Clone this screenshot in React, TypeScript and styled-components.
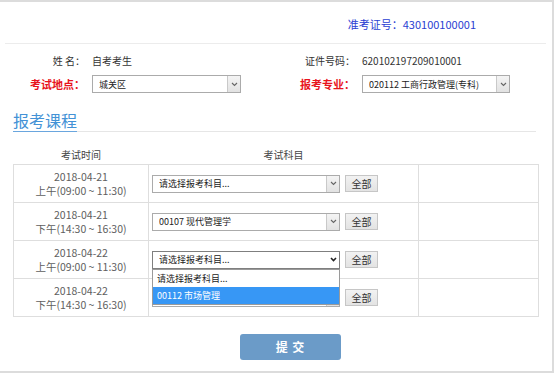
import React from 'react';
import styled, { createGlobalStyle } from 'styled-components';

const GlobalStyle = createGlobalStyle`
  body {
    margin: 0;
    background: #fff;
    font-family: "Noto Sans CJK SC", "Open Sans", sans-serif;
    color: #333;
  }
`;

const Frame = styled.div`
  box-sizing: border-box;
  width: 554px;
  height: 373px;
  border-top: 2px solid #dcdcdc;
  border-right: 2px solid #dcdcdc;
  border-bottom: 2px solid #dcdcdc;
  overflow: hidden;
`;

const TicketBar = styled.div`
  box-sizing: border-box;
  height: 41px;
  padding: 3px 76px 0 0;
  display: flex;
  align-items: center;
  justify-content: flex-end;
  font-size: 11px;
  color: #2a3ed2;
`;

const Divider = styled.div`
  height: 1px;
  margin: 0 6px 0 5px;
  background: #ececec;
`;

const InfoGrid = styled.div`
  display: flex;
  flex-direction: column;
  gap: 6px;
  padding-top: 7px;
`;

const InfoRow = styled.div`
  display: flex;
  align-items: center;
  height: 18px;
`;

const Field = styled.div<{ $width?: number }>`
  display: flex;
  align-items: center;
  width: ${({ $width }) => ($width ? `${$width}px` : 'auto')};
`;

const Label = styled.span<{ $width: number; $accent?: boolean }>`
  width: ${({ $width }) => $width}px;
  margin-right: 7px;
  text-align: right;
  white-space: nowrap;
  font-size: ${({ $accent }) => ($accent ? '11px' : '10px')};
  font-weight: ${({ $accent }) => ($accent ? 700 : 400)};
  color: ${({ $accent }) => ($accent ? '#e8141c' : '#333')};
`;

const Value = styled.span`
  font-size: 10px;
  color: #333;
  white-space: nowrap;
`;

const SelectBox = styled.div<{ $width: number; $focused?: boolean }>`
  box-sizing: border-box;
  width: ${({ $width }) => $width}px;
  height: 18px;
  display: flex;
  align-items: center;
  border: 1px solid ${({ $focused }) => ($focused ? '#7f7f7f' : '#ababab')};
  background: #fff;
  font-size: 9px;
  color: #222;
  padding-left: 6px;
  white-space: nowrap;
`;

const SelectText = styled.span`
  flex: 1;
  overflow: hidden;
`;

const ArrowBox = styled.span<{ $focused?: boolean }>`
  box-sizing: border-box;
  width: 13px;
  height: 100%;
  display: flex;
  align-items: center;
  justify-content: center;
  background: ${({ $focused }) => ($focused ? '#fff' : 'linear-gradient(#f4f4f4, #e2e2e2)')};
  border-left: 1px solid ${({ $focused }) => ($focused ? '#fff' : '#c9c9c9')};
`;

const SectionTitle = styled.div`
  margin: 17px 16px 0 13px;
  border-bottom: 1px solid #e6e6e6;
  display: flex;
`;

const TitleText = styled.span`
  font-size: 16px;
  line-height: 20px;
  color: #4392d6;
  padding-bottom: 1px;
  border-bottom: 1px solid #6aa6de;
  margin-bottom: -1px;
`;

const Table = styled.table`
  margin: 12px 0 0 13px;
  width: 525px;
  border-collapse: collapse;
  table-layout: fixed;
`;

const HeadCell = styled.th`
  height: 20px;
  padding: 0;
  font-size: 10px;
  font-weight: 400;
  color: #444;
  text-align: center;
`;

const Cell = styled.td`
  height: 37px;
  padding: 0;
  border: 1px solid #dedede;
  vertical-align: middle;
`;

const DateCell = styled(Cell)`
  text-align: center;
  font-size: 10.5px;
  line-height: 14px;
  color: #5e5e5e;
`;

const SubjectLine = styled.div`
  display: flex;
  align-items: center;
  gap: 5px;
  padding-left: 3px;
`;

const SelectWrap = styled.div`
  position: relative;
`;

const OptionList = styled.div`
  position: absolute;
  top: 100%;
  left: 0;
  z-index: 2;
  box-sizing: border-box;
  width: 188px;
  background: #fff;
  border: 1px solid #9a9a9a;
`;

const Option = styled.div<{ $active?: boolean }>`
  height: 17px;
  display: flex;
  align-items: center;
  padding-left: 4px;
  font-size: 9px;
  color: ${({ $active }) => ($active ? '#fff' : '#222')};
  background: ${({ $active }) => ($active ? '#3797f5' : '#fff')};
`;

const AllButton = styled.button`
  box-sizing: border-box;
  width: 33px;
  height: 17px;
  padding: 0;
  border: 1px solid #c6c6c6;
  background: linear-gradient(#f2f2f2, #e3e3e3);
  font-family: inherit;
  font-size: 10px;
  color: #333;
`;

const Footer = styled.div`
  padding: 16px 0 0 240px;
`;

const SubmitButton = styled.button`
  width: 101px;
  height: 26px;
  border: none;
  border-radius: 3px;
  background: #6b9bc8;
  color: #fff;
  font-family: inherit;
  font-size: 12px;
  font-weight: 700;
  letter-spacing: 1px;
`;

const Chevron = ({ dark }: { dark?: boolean }) => (
  <svg width="7" height="5" viewBox="0 0 7 5">
    <path d="M1 1 L3.5 3.5 L6 1" fill="none" stroke={dark ? '#222' : '#666'} strokeWidth={dark ? 1.6 : 1.1} />
  </svg>
);

interface ISelect {
  width: number;
  text: string;
  focused?: boolean;
}

const FakeSelect: React.FC<ISelect> = ({ width, text, focused }) => (
  <SelectBox $focused={focused} $width={width}>
    <SelectText>{text}</SelectText>
    <ArrowBox $focused={focused}>
      <Chevron dark={focused} />
    </ArrowBox>
  </SelectBox>
);

// last row's select sits under the open list, so its label is not visible
const sessions = [
  { date: '2018-04-21', time: '上午(09:00 ~ 11:30)', subject: '请选择报考科目...' },
  { date: '2018-04-21', time: '下午(14:30 ~ 16:30)', subject: '00107 现代管理学' },
  { date: '2018-04-22', time: '上午(09:00 ~ 11:30)', subject: '请选择报考科目...', open: true },
  { date: '2018-04-22', time: '下午(14:30 ~ 16:30)', subject: '' },
];

const App: React.FC = () => (
  <>
    <GlobalStyle />
    <Frame>
      <TicketBar>准考证号：430100100001</TicketBar>
      <Divider />

      <InfoGrid>
        <InfoRow>
          <Field $width={299}>
            <Label $width={85}>姓 名：</Label>
            <Value>自考考生</Value>
          </Field>
          <Field>
            <Label $width={56}>证件号码：</Label>
            <Value>620102197209010001</Value>
          </Field>
        </InfoRow>
        <InfoRow>
          <Field $width={299}>
            <Label $accent $width={85}>考试地点：</Label>
            <FakeSelect text="城关区" width={149} />
          </Field>
          <Field>
            <Label $accent $width={56}>报考专业：</Label>
            <FakeSelect text="020112 工商行政管理(专科)" width={148} />
          </Field>
        </InfoRow>
      </InfoGrid>

      <SectionTitle>
        <TitleText>报考课程</TitleText>
      </SectionTitle>

      <Table>
        <colgroup>
          <col style={{ width: 135 }} />
          <col style={{ width: 270 }} />
          <col style={{ width: 120 }} />
        </colgroup>
        <thead>
          <tr>
            <HeadCell>考试时间</HeadCell>
            <HeadCell>考试科目</HeadCell>
            <HeadCell />
          </tr>
        </thead>
        <tbody>
          {sessions.map((s, i) => (
            <tr key={i}>
              <DateCell>
                {s.date}
                <br />
                {s.time}
              </DateCell>
              <Cell>
                <SubjectLine>
                  <SelectWrap>
                    <FakeSelect focused={s.open} text={s.subject} width={188} />
                    {s.open && (
                      <OptionList>
                        <Option>请选择报考科目...</Option>
                        <Option $active>00112 市场管理</Option>
                      </OptionList>
                    )}
                  </SelectWrap>
                  <AllButton>全部</AllButton>
                </SubjectLine>
              </Cell>
              <Cell />
            </tr>
          ))}
        </tbody>
      </Table>

      <Footer>
        <SubmitButton>提 交</SubmitButton>
      </Footer>
    </Frame>
  </>
);

export default App;
